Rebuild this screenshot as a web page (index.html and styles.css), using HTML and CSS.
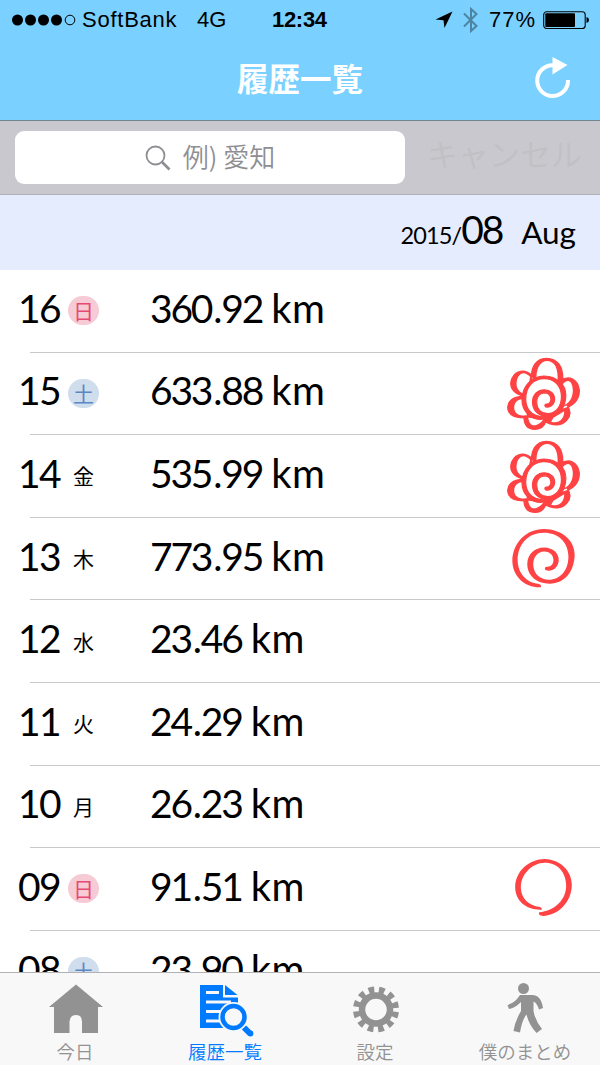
FILE: index.html
```html
<!DOCTYPE html>
<html lang="ja">
<head>
    <meta charset="UTF-8">
    <meta name="viewport" content="width=device-width, initial-scale=1.0">
    <title>履歴一覧</title>
    <link rel="stylesheet" href="styles.css">
</head>
<body>
    <svg class="defs" width="0" height="0">
        <symbol id="swirl" viewBox="64 24 194 184">
            <path id="swirlPath" d="M153 203C105 205 67 170 67 122C68 70 108 27 162 27C218 28 255 62 255 105C254 155 225 192 180 192C140 192 112 168 112 132C113 102 135 83 163 83C190 84 208 100 207 122C205 145 185 158 167 151C163 146 166 141 172 141C184 142 191 132 191 120C190 104 178 95 163 95C142 96 130 112 130 135C131 162 150 180 177 180C212 180 238 150 236 106C234 65 205 38 162 38C115 38 83 72 83 122C84 162 112 190 145 192C152 193 155 197 153 203Z"/>
        </symbol>
        <symbol id="flower" viewBox="45 18 230 228">
            <path class="outline" d="M125 90C120 50 140 25 168 25C200 25 222 48 217 98ZM127 78C105 56 77 60 65 86C56 108 66 132 105 140L140 110ZM107 140C67 136 48 158 54 180C59 197 78 206 115 203L130 170ZM102 192C99 225 112 238 135 238C152 238 163 228 168 212L150 180ZM158 211C190 230 217 228 231 209C244 195 242 182 230 164L190 180ZM210 92C238 74 262 88 267 118C270 148 250 172 208 180Z"/>
            <path class="petal" d="M140 95C135 55 151 33 172 33C194 35 205 55 202 95ZM120 81C101 61 86 70 80 92C76 112 84 126 108 134ZM105 147C80 146 69 160 73 180C77 193 90 198 110 196ZM114 203C118 224 127 229 140 224C150 220 157 214 159 208ZM183 215C205 221 222 210 222 184L190 203ZM219 101C236 83 247 97 248 120C248 144 238 162 212 170Z"/>
            <ellipse class="petal" cx="160" cy="140" rx="60" ry="59"/>
            <use href="#swirlPath" class="thick" transform="translate(48.5 58) scale(.7 .74)"/>
        </symbol>
        <symbol id="ring" viewBox="73 41 176 177">
            <path d="M156 196C110 198 76 170 76 128C77 80 118 44 165 44C212 46 246 80 246 122C245 175 205 212 160 215C150 215 145 210 148 204C195 200 230 165 229 122C228 85 205 55 165 55C125 56 93 90 93 130C94 162 115 183 150 188C155 190 157 193 156 196Z"/>
        </symbol>
    </svg>

    <header>
        <div class="status-bar">
            <svg class="signal" width="64" height="12" viewBox="0 0 64 12">
                <circle cx="5.5" cy="6" r="5.5"/><circle cx="18.5" cy="6" r="5.5"/><circle cx="31.5" cy="6" r="5.5"/><circle cx="44.5" cy="6" r="5.5"/>
                <circle cx="58" cy="6" r="4.8" fill="none" stroke="#000" stroke-width="1"/>
            </svg>
            <span class="carrier">SoftBank</span>
            <span class="network">4G</span>
            <span class="time">12:34</span>
            <svg class="location" width="18" height="18" viewBox="0 0 18 18"><path d="M17.5 .5L9.5 17L8.5 9.2L.5 8.5Z"/></svg>
            <svg class="bluetooth" width="15" height="26" viewBox="0 0 15 26"><path d="M1 6.5L13.5 19L8 24V2L13.5 7L1 19.5"/></svg>
            <span class="percent">77%</span>
            <svg class="battery" width="47" height="18" viewBox="0 0 47 18">
                <rect x=".7" y=".7" width="41.5" height="16.8" rx="3" fill="none" stroke="#000" stroke-width="1.1"/>
                <rect x="2.3" y="2.3" width="29.7" height="13.6" rx="1"/>
                <path d="M43.5 6Q46 6.5 46 9T43.5 12Z"/>
            </svg>
        </div>
        <div class="nav-bar">
            <h1>履歴一覧</h1>
            <svg class="reload" width="36" height="42" viewBox="0 0 36 42">
                <path d="M18 8.2A15.4 15.4 0 1 0 33 23" fill="none" stroke="#fff" stroke-width="4"/>
                <path d="M17.5 0L32.5 8L17.5 17.5Z" fill="#fff"/>
            </svg>
        </div>
    </header>

    <div class="search-bar">
        <div class="search-field">
            <svg width="26" height="26" viewBox="0 0 26 26"><circle cx="10.5" cy="10.5" r="9"/><path d="M16.5 16.5L24.5 24.5" stroke-width="2.6"/></svg>
            <span>例) 愛知</span>
        </div>
        <span class="cancel">キャンセル</span>
    </div>

    <main>
        <h2><span class="year">2015/</span><span class="month">08</span><span class="name">Aug</span></h2>
        <ul class="history">
            <li><span class="day">16</span><span class="week sun">日</span><span class="distance">360<b>.</b>92</span><span class="unit">km</span></li>
            <li><span class="day">15</span><span class="week sat">土</span><span class="distance">633<b>.</b>88</span><span class="unit">km</span><svg class="mark flower"><use href="#flower"/></svg></li>
            <li><span class="day">14</span><span class="week">金</span><span class="distance">535<b>.</b>99</span><span class="unit">km</span><svg class="mark flower"><use href="#flower"/></svg></li>
            <li><span class="day">13</span><span class="week">木</span><span class="distance">773<b>.</b>95</span><span class="unit">km</span><svg class="mark swirl"><use href="#swirl"/></svg></li>
            <li><span class="day">12</span><span class="week">水</span><span class="distance">23<b>.</b>46</span><span class="unit">km</span></li>
            <li><span class="day">11</span><span class="week">火</span><span class="distance">24<b>.</b>29</span><span class="unit">km</span></li>
            <li><span class="day">10</span><span class="week">月</span><span class="distance">26<b>.</b>23</span><span class="unit">km</span></li>
            <li><span class="day">09</span><span class="week sun">日</span><span class="distance">91<b>.</b>51</span><span class="unit">km</span><svg class="mark ring"><use href="#ring"/></svg></li>
            <li><span class="day">08</span><span class="week sat">土</span><span class="distance">23<b>.</b>90</span><span class="unit">km</span></li>
        </ul>
    </main>

    <nav class="tab-bar">
        <a class="tab">
            <svg width="60" height="56" viewBox="0 0 60 56"><path d="M31 1.5L58 24H53V50H37V38.5Q37 32 31 32T24.5 38.5V50H9V24H4Z"/></svg>
            <span>今日</span>
        </a>
        <a class="tab active">
            <svg width="60" height="56" viewBox="0 0 60 56">
                <path d="M5 2H28V14.5H43V45H5Z"/>
                <path d="M30 2V12H42.5Z"/>
                <path d="M11 9.5H24M11 19H36M11 28.5H26M11 38H26" stroke="#f8f8f8" stroke-width="2.8"/>
                <circle cx="38.5" cy="34" r="15" fill="#f8f8f8"/>
                <circle cx="38.5" cy="34" r="11" fill="#f8f8f8" stroke="#007aff" stroke-width="4.5"/>
                <path d="M49 44.5L55.500 51" stroke="#007aff" stroke-width="6"/>
                <circle cx="55.5" cy="50.5" r="2.9"/>
            </svg>
            <span>履歴一覧</span>
        </a>
        <a class="tab">
            <svg width="60" height="56" viewBox="-31 -26.5 60 56">
                <circle r="14" fill="none" stroke="#929292" stroke-width="6.5"/>
                <circle r="19.5" fill="none" stroke="#929292" stroke-width="7" stroke-dasharray="5.5 4.71" stroke-dashoffset="-2.355"/>
            </svg>
            <span>設定</span>
        </a>
        <a class="tab">
            <svg width="60" height="56" viewBox="0 0 60 56">
                <circle cx="28.5" cy="5.5" r="5.5"/>
                <path d="M25 12H37Q46 12 48 25L44 26.5Q42 20 38.5 18.5V28Q40 37 47 46L41.5 50Q34 42 31.5 31.5Q27 37 25 49.5L18.5 48Q20 38 26 28V19Q20 25 14 26L12.5 22Q20 20 25 12Z"/>
            </svg>
            <span>僕のまとめ</span>
        </a>
    </nav>
</body>
</html>
```

FILE: styles.css
```css
* {
    box-sizing: border-box;
}

body {
    margin: 0;
    height: 1065px;
    overflow: hidden;
    display: flex;
    flex-direction: column;
    background: white;
    color: #000;
    font-family: "Lato", "Noto Sans CJK JP", sans-serif;
}

svg {
    display: block;
    flex: none;
}

.defs {
    position: absolute;
}

header {
    flex: none;
    height: 121px;
    background-color: #7ad1ff;
    border-bottom: 1px solid #738591;
}

.status-bar {
    display: flex;
    align-items: center;
    height: 39px;
    padding-left: 12px;
    font: 22px/39px "Liberation Sans", Arial, sans-serif;
}

.carrier {
    width: 114px;
    padding-left: 6px;
    letter-spacing: 0.75px;
}

.network {
    width: 82px;
    padding-left: 7px;
}

.time {
    width: 163px;
    font-weight: bold;
    letter-spacing: -0.3px;
}

.bluetooth {
    margin: 0 11px 0 10px;
    fill: none;
    stroke: #4d84a1;
    stroke-width: 2;
}

.percent {
    width: 54px;
    letter-spacing: 1px;
}

.nav-bar {
    position: relative;
    height: 81px;
}

h1 {
    margin: 0;
    color: white;
    text-align: center;
    font: bold 31.5px/77px "Noto Sans CJK JP", sans-serif;
}

.reload {
    position: absolute;
    top: 18px;
    right: 29px;
}

.search-bar {
    flex: none;
    display: flex;
    height: 74px;
    padding: 10px 15px;
    background: #c9c8ce;
    border-bottom: 1px solid #b2b1b8;
    font-family: "Noto Sans CJK JP", sans-serif;
}

.search-field {
    display: flex;
    align-items: center;
    justify-content: center;
    gap: 12px;
    width: 390px;
    height: 53px;
    background: white;
    border-radius: 9px;
    color: #8e8e93;
    font-size: 26px;
    font-weight: 350;
}

.search-field span {
    padding-bottom: 5px;
}

.search-field svg {
    fill: none;
    stroke: #8e8e93;
    stroke-width: 1.8;
}

.cancel {
    padding-left: 22px;
    color: #c1c0c5;
    font-size: 31px;
    font-weight: 350;
    line-height: 44px;
    white-space: nowrap;
}

main {
    flex: 1;
    min-height: 0;
    overflow: hidden;
}

h2 {
    display: flex;
    align-items: baseline;
    justify-content: flex-end;
    height: 75px;
    margin: 0;
    padding: 0 24px 0 0;
    background: #e5ecfd;
    font-weight: normal;
    line-height: 69px;
}

.year {
    font-size: 23.5px;
    letter-spacing: -0.9px;
}

.month {
    width: 60px;
    font-size: 39px;
    letter-spacing: -2px;
}

.name {
    font-size: 31.5px;
}

.history {
    list-style: none;
    margin: 0;
    padding: 0;
}

.history li {
    position: relative;
    display: flex;
    align-items: center;
    height: 82.6px;
    padding: 0 20px 7px 18px;
    font-size: 39px;
}

.history li::after {
    content: "";
    position: absolute;
    left: 30px;
    right: 0;
    bottom: 0;
    height: 1px;
    background: #c8c7cc;
}

.day {
    width: 50px;
    letter-spacing: -1.6px;
}

.week {
    width: 31px;
    height: 29px;
    margin: 6px 51px 0 0;
    border-radius: 15px;
    font: 21px/28px "Noto Sans CJK JP", sans-serif;
    text-align: center;
}

.sun {
    background: #f6cbd5;
    color: #e64a72;
}

.sat {
    background: #cfdded;
    color: #5a88c4;
}

.distance {
    letter-spacing: -2.2px;
}

.distance b {
    padding: 0 1px 0 2px;
    font-weight: normal;
}

.unit {
    padding-left: 9px;
    font-size: 40px;
    letter-spacing: 0.5px;
}

.mark {
    position: absolute;
    fill: #ff4243;
}

.petal {
    fill: white;
}

.outline {
    stroke: #ff4243;
    stroke-width: 4;
    stroke-linejoin: round;
}

.thick {
    stroke: #ff4243;
    stroke-width: 5;
}

.mark.flower {
    top: 3.5px;
    right: 18px;
    width: 77px;
    height: 76px;
}

.mark.swirl {
    top: 10px;
    right: 24px;
    width: 65px;
    height: 61px;
}

.mark.ring {
    top: 10px;
    right: 27px;
    width: 59px;
    height: 59px;
}

.tab-bar {
    flex: none;
    display: flex;
    height: 93px;
    background: #f8f8f8;
    border-top: 1px solid #b2b2b2;
}

.tab {
    flex: 1;
    display: flex;
    flex-direction: column;
    align-items: center;
    padding-top: 10px;
    color: #929292;
    fill: #929292;
    font: 350 18.5px/24px "Noto Sans CJK JP", sans-serif;
}

.active {
    color: #007aff;
    fill: #007aff;
}
```
